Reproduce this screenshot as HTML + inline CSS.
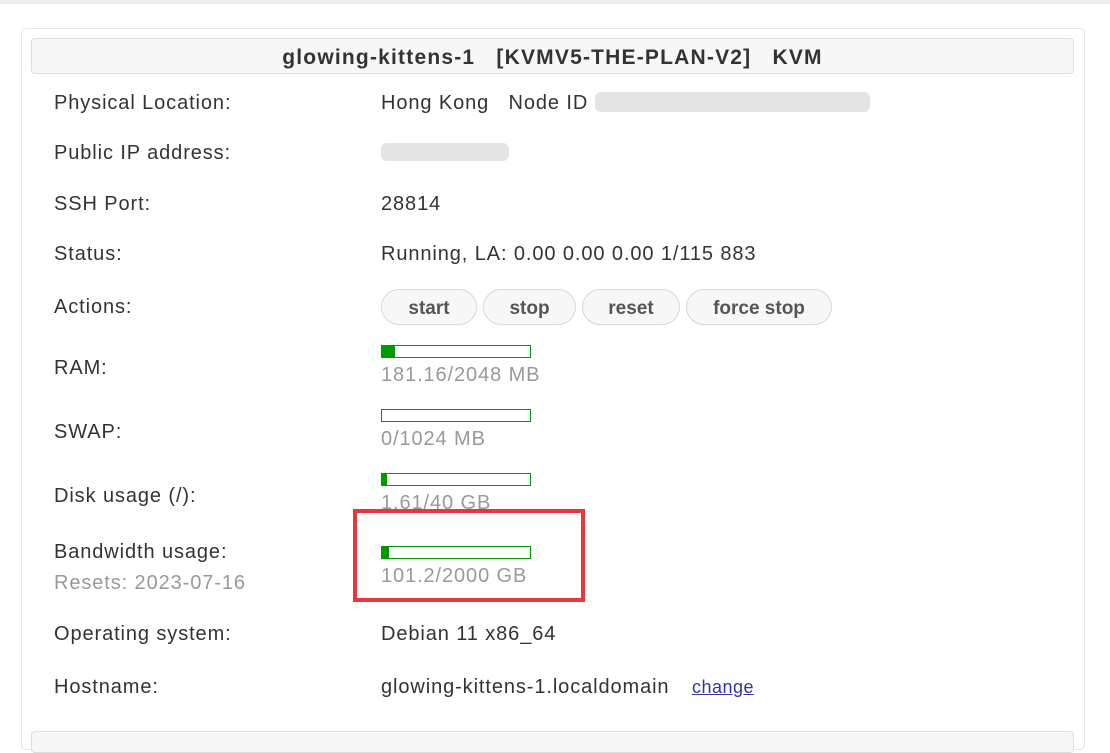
<!DOCTYPE html>
<html><head><meta charset="utf-8"><style>
body{margin:0;width:1110px;height:740px;background:#fff;position:relative;overflow:hidden;font-family:"Liberation Sans",Arial,sans-serif;color:#333;}
.a{position:absolute;white-space:nowrap;font-size:20px;line-height:22px;letter-spacing:0.9px;}
.g{color:#999;}
.btn{position:absolute;top:289px;height:34px;border:1px solid #d8d8d8;border-radius:18px;background:#f7f7f7;font-weight:bold;font-size:19px;color:#555;text-align:center;line-height:38px;}
.bar{position:absolute;left:381px;width:148px;height:11px;border:1px solid #090;background:#fff;}
.bar i{display:block;height:11px;background:#090;}
.blur{position:absolute;background:#e4e4e4;border-radius:6px;}
</style></head><body>
<div style="position:absolute;left:0;top:0;width:1110px;height:4px;background:#eee"></div>
<div style="position:absolute;left:21px;top:28px;width:1062px;height:720px;border:1px solid #e6e6e6;border-radius:5px"></div>
<div style="position:absolute;left:31px;top:38px;width:1041px;height:34px;border:1px solid #ddd;border-radius:4px;background:#f7f7f7;text-align:center;font-weight:bold;font-size:21px;line-height:38px;color:#333;white-space:pre;letter-spacing:1.2px">glowing-kittens-1   [KVMV5-THE-PLAN-V2]   KVM</div>
<div style="position:absolute;left:31px;top:731px;width:1041px;height:20px;border:1px solid #ddd;border-radius:4px;background:#f7f7f7"></div>

<div class="a" style="left:54px;top:92px">Physical Location:</div>
<div class="a" style="left:381px;top:92px">Hong Kong&nbsp;&nbsp;&nbsp;Node ID</div>
<div class="blur" style="left:595px;top:92px;width:275px;height:20px"></div>
<div class="a" style="left:54px;top:142px">Public IP address:</div>
<div class="blur" style="left:381px;top:143px;width:128px;height:18px"></div>
<div class="a" style="left:54px;top:193px">SSH Port:</div>
<div class="a" style="left:381px;top:193px">28814</div>
<div class="a" style="left:54px;top:243px">Status:</div>
<div class="a" style="left:381px;top:243px">Running, LA: 0.00 0.00 0.00 1/115 883</div>
<div class="a" style="left:54px;top:296px">Actions:</div>
<div class="btn" style="left:381px;width:94px">start</div>
<div class="btn" style="left:483px;width:91px">stop</div>
<div class="btn" style="left:582px;width:96px">reset</div>
<div class="btn" style="left:686px;width:144px">force stop</div>

<div class="a" style="left:54px;top:357px">RAM:</div>
<div class="bar" style="top:345px"><i style="width:13px"></i></div>
<div class="a g" style="left:381px;top:364px">181.16/2048 MB</div>
<div class="a" style="left:54px;top:421px">SWAP:</div>
<div class="bar" style="top:409px"><i style="width:0"></i></div>
<div class="a g" style="left:381px;top:428px">0/1024 MB</div>
<div class="a" style="left:54px;top:485px">Disk usage (/):</div>
<div class="bar" style="top:473px"><i style="width:5px"></i></div>
<div class="a g" style="left:381px;top:492px">1.61/40 GB</div>
<div class="a" style="left:54px;top:541px">Bandwidth usage:</div>
<div class="a g" style="left:54px;top:572px">Resets: 2023-07-16</div>
<div class="bar" style="top:546px"><i style="width:7px"></i></div>
<div class="a g" style="left:381px;top:565px">101.2/2000 GB</div>
<div style="position:absolute;left:353px;top:509px;width:224px;height:85px;border:4px solid #e8373a"></div>
<div class="a" style="left:54px;top:623px">Operating system:</div>
<div class="a" style="left:381px;top:623px">Debian 11 x86_64</div>
<div class="a" style="left:54px;top:676px">Hostname:</div>
<div class="a" style="left:381px;top:676px">glowing-kittens-1.localdomain</div>
<div class="a" style="left:692px;top:676px;color:#33a;text-decoration:underline;font-size:18px;letter-spacing:0.5px">change</div>
</body></html>
